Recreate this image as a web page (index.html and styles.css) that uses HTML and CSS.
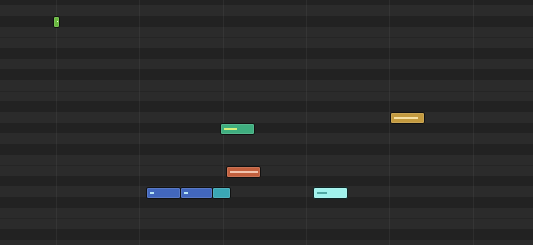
FILE: index.html
```html
<!DOCTYPE html>
<html lang="en">
<head>
    <meta charset="UTF-8">
    <title>Piano Roll</title>
    <link rel="stylesheet" href="styles.css">
</head>
<body>

<div class="roll">
    <!-- key rows, top is G# -->
    <div class="rows">
        <div class="row black"></div>
        <div class="row white"></div>
        <div class="row black"></div>
        <div class="row white"></div>
        <div class="row white split"></div>
        <div class="row black"></div>
        <div class="row white"></div>
        <div class="row black"></div>
        <div class="row white"></div>
        <div class="row white split"></div>
        <div class="row black"></div>
        <div class="row white"></div>
        <div class="row black"></div>
        <div class="row white"></div>
        <div class="row black"></div>
        <div class="row white"></div>
        <div class="row white split"></div>
        <div class="row black"></div>
        <div class="row white"></div>
        <div class="row black"></div>
        <div class="row white"></div>
        <div class="row white split"></div>
        <div class="row black"></div>
        <div class="row white"></div>
    </div>

    <!-- beat lines -->
    <div class="beats">
        <div class="beat"></div>
        <div class="beat"></div>
        <div class="beat"></div>
        <div class="beat"></div>
        <div class="beat"></div>
        <div class="beat"></div>
        <div class="beat"></div>
        <div class="beat"></div>
    </div>

    <!-- notes -->
    <div class="note lime" style="left:53px; top:16px; width:7px;"><span class="dot"></span></div>
    <div class="note green" style="left:220px; top:123px; width:35px;"><span class="vel" style="width:13px;"></span></div>
    <div class="note orange" style="left:226px; top:166px; width:35px;"><span class="vel" style="width:28px;"></span></div>
    <div class="note gold" style="left:390px; top:112px; width:35px;"><span class="vel" style="width:24px;"></span></div>
    <div class="note blue" style="left:146px; top:187px; width:35px;"><span class="vel" style="width:4px;"></span></div>
    <div class="note blue" style="left:180px; top:187px; width:33px;"><span class="vel" style="width:4px;"></span></div>
    <div class="note teal" style="left:212px; top:187px; width:19px;"></div>
    <div class="note ice" style="left:313px; top:187px; width:35px;"><span class="vel" style="width:10px;"></span></div>
</div>

</body>
</html>
```

FILE: styles.css
```css
body {
    margin: 0;
    background-color: #232323;
    overflow: hidden;
}
.roll {
    position: relative;
    width: 533px;
    height: 245px;
    overflow: hidden;
}
.rows {
    display: flex;
    flex-direction: column;
    margin-top: -5.33px;
}
.row {
    height: 10.667px;
    flex: none;
    box-sizing: border-box;
}
.row.black {
    background-color: #222222;
}
.row.white {
    background-color: #2b2b2b;
}
.row.split {
    border-top: 1px solid #252525; /* line between E/F and B/C */
}
.beats {
    position: absolute;
    top: 0;
    bottom: 0;
    left: -26.4px;
    display: flex;
}
.beat {
    width: 83.333px;
    flex: none;
    box-sizing: border-box;
    border-right: 1px solid rgba(255, 255, 255, 0.05);
}
.note {
    position: absolute;
    height: 12px;
    box-sizing: border-box;
    border: 1px solid #111;
    border-radius: 2px;
    box-shadow: inset 0 0 0 1px rgba(255, 255, 255, 0.12);
}
.vel {
    position: absolute;
    left: 3px;
    top: 4px;
    height: 2px;
}
.dot {
    position: absolute;
    left: 3px;
    top: 4px;
    width: 1px;
    height: 1px;
    background-color: #e8ffd0;
}
.lime {
    background-color: #68b83e;
}
.green {
    background-color: #3fae7f;
}
.green .vel {
    background-color: #d6f07c;
}
.orange {
    background-color: #c2603e;
}
.orange .vel {
    background-color: #f2c4ae;
}
.gold {
    background-color: #c39a3f;
}
.gold .vel {
    background-color: #f6e0a4;
}
.blue {
    background-color: #4267bd;
}
.blue .vel {
    background-color: #b8e6f4;
}
.teal {
    background-color: #3aa7b5;
}
.ice {
    background-color: #a0f2ec;
    border-color: #0d2626;
}
.ice .vel {
    background-color: #4fa8a3;
}
```
